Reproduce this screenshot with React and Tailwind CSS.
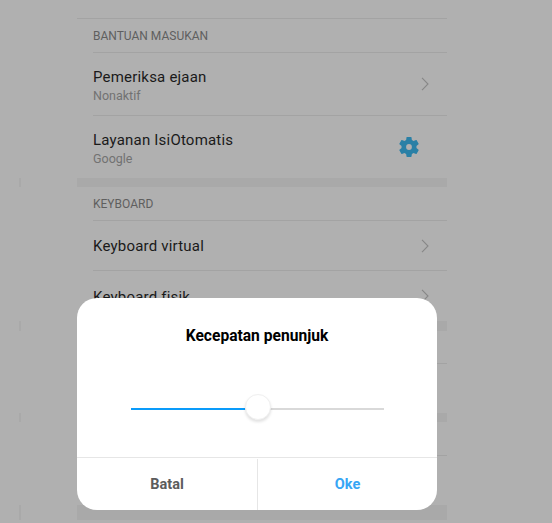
const font = "font-['Roboto','Noto_Sans',sans-serif]";

function Chevron() {
  return (
    <svg viewBox="0 0 8 14" className="h-[14px] w-[8px]" fill="none" stroke="#878787" strokeWidth="1.1">
      <path d="M1 .8L7 7L1 13.2" />
    </svg>
  );
}

function GearIcon() {
  return (
    <svg viewBox="0 0 24 24" className="h-[24px] w-[24px]" fill="#2a80a6" fillRule="evenodd">
      <path d="M19.43 12.98c.04-.32.07-.64.07-.98s-.03-.66-.07-.98l2.11-1.65c.19-.15.24-.42.12-.64l-2-3.46c-.12-.22-.39-.3-.61-.22l-2.49 1c-.52-.4-1.08-.73-1.69-.98l-.38-2.65C14.46 2.18 14.25 2 14 2h-4c-.25 0-.46.18-.49.42l-.38 2.65c-.61.25-1.17.59-1.69.98l-2.49-1c-.23-.09-.49 0-.61.22l-2 3.46c-.13.22-.07.49.12.64l2.11 1.65c-.04.32-.07.65-.07.98s.03.66.07.98l-2.11 1.65c-.19.15-.24.42-.12.64l2 3.46c.12.22.39.3.61.22l2.49-1c.52.4 1.08.73 1.69.98l.38 2.65c.03.24.24.42.49.42h4c.25 0 .46-.18.49-.42l.38-2.65c.61-.25 1.17-.59 1.69-.98l2.49 1c.23.09.49 0 .61-.22l2-3.46c.12-.22.07-.49-.12-.64l-2.11-1.65zM12 14.9a2.9 2.9 0 1 1 0-5.8 2.9 2.9 0 0 1 0 5.8z" />
    </svg>
  );
}

function Row({ title, subtitle, icon, height, border = true }) {
  return (
    <div className="ml-[74px] w-[354px]">
      <div className={`${height} flex items-center justify-between ${border ? "border-b border-[#a3a3a3]" : ""}`}>
        <div className={subtitle ? "pt-[2px]" : "pt-[1px]"}>
          <div className="text-[15px] leading-[20px] tracking-[0.2px] text-[#1a1a1a]">{title}</div>
          {subtitle && <div className="text-[12.5px] leading-[17px] text-[#727272]">{subtitle}</div>}
        </div>
        <div className={icon === "gear" ? "mr-[26px]" : "mr-[18px]"}>
          {icon === "gear" ? <GearIcon /> : <Chevron />}
        </div>
      </div>
    </div>
  );
}

function Band({ height }) {
  return (
    <div className={`flex ${height}`}>
      <div className="w-[2px] bg-[#a9a9a9]" />
      <div className="ml-[56px] w-[370px] bg-[#a9a9a9]" />
    </div>
  );
}

function Rule() {
  return <div className="ml-[58px] w-[370px] border-t border-[#a3a3a3]" />;
}

export default function App() {
  return (
    <div className={`relative h-[523px] w-[552px] overflow-hidden bg-[#b0b0b0] ${font}`}>
      <div className="ml-[19px] pt-[18px]">
        <Rule />
        <div className="ml-[74px] flex h-[34px] w-[354px] items-center border-b border-[#a3a3a3] text-[12px] text-[#5f5f5f]">
          BANTUAN MASUKAN
        </div>
        <Row title="Pemeriksa ejaan" subtitle="Nonaktif" height="h-[63px]" />
        <Row title="Layanan IsiOtomatis" subtitle="Google" icon="gear" height="h-[62px]" border={false} />
        <Band height="h-[9px]" />
        <div className="ml-[74px] flex h-[34px] w-[354px] items-center border-b border-[#a3a3a3] text-[12px] text-[#5f5f5f]">
          KEYBOARD
        </div>
        <Row title="Keyboard virtual" height="h-[50px]" />
        <Row title="Keyboard fisik" height="h-[50px]" border={false} />
        <Band height="h-[10px]" />
        <div className="h-[32px]" />
        <Rule />
        <div className="h-[49px]" />
        <Band height="h-[9px]" />
        <div className="h-[33px]" />
        <Rule />
        <div className="h-[49px]" />
        <Band height="h-[15px]" />
      </div>

      {/* dialog */}
      <div className="absolute left-[77px] top-[298px] flex h-[212px] w-[360px] flex-col rounded-[20px] bg-white">
        <div className="pt-[28px] text-center text-[15.6px] font-bold leading-[20px] text-black">
          Kecepatan penunjuk
        </div>
        <div className="relative ml-[54px] mt-[53px] flex h-[20px] w-[253px] items-center">
          <div className="h-[2px] w-[114px] bg-[#0a9bfa]" />
          <div className="h-[2px] flex-1 bg-[#d9d9d9]" />
          <div className="absolute left-[114px] top-[-5px] h-[26px] w-[26px] rounded-full border border-[#f0f0f0] bg-white shadow-[0_2px_3px_rgba(0,0,0,0.12)]" />
        </div>
        <div className="mt-auto flex h-[53px] border-t border-[#e6e6e6] pt-[1px] text-[14.5px] font-bold">
          <div className="flex w-[181px] items-center justify-center border-r border-[#e6e6e6] text-[#5c5c5c]">
            Batal
          </div>
          <div className="flex flex-1 items-center justify-center text-[#37a6f5]">Oke</div>
        </div>
      </div>
    </div>
  );
}
